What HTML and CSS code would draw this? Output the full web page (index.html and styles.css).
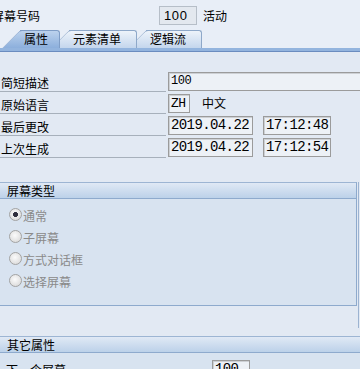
FILE: index.html
```html
<!DOCTYPE html>
<html lang="zh">
<head>
  <meta charset="UTF-8" />
  <title>屏幕属性</title>
  <link rel="stylesheet" href="styles.css">
</head>
<body>
  <div class="topbar">
    <span class="title">屏幕号码</span>
    <span class="num">100</span>
    <span class="status">活动</span>
  </div>

  <div class="tabs">
    <div class="tab active">属性</div>
    <div class="tab t2">元素清单</div>
    <div class="tab t3">逻辑流</div>
  </div>
  <div class="tabline"></div>

  <div class="page">
    <div class="row">
      <span class="label">简短描述</span>
      <span class="field wide">100</span>
    </div>
    <div class="row">
      <span class="label">原始语言</span>
      <span class="field lang">ZH</span>
      <span class="note">中文</span>
    </div>
    <div class="row">
      <span class="label">最后更改</span>
      <span class="field date">2019.04.22</span>
      <span class="field time">17:12:48</span>
    </div>
    <div class="row">
      <span class="label">上次生成</span>
      <span class="field date">2019.04.22</span>
      <span class="field time">17:12:54</span>
    </div>

    <div class="frame">
      <div class="group">
        <div class="group-head">屏幕类型</div>
        <div class="group-body">
          <div class="radio checked"><span class="dot"></span>通常</div>
          <div class="radio"><span class="dot"></span>子屏幕</div>
          <div class="radio"><span class="dot"></span>方式对话框</div>
          <div class="radio"><span class="dot"></span>选择屏幕</div>
        </div>
      </div>
    </div>

    <div class="group other">
      <div class="group-head">其它属性</div>
      <div class="group-body">
        <div class="row next">
          <span class="plain">下一个屏幕</span>
          <span class="field small">100</span>
        </div>
      </div>
    </div>
  </div>
</body>
</html>
```

FILE: styles.css
```css
html, body {
  margin: 0; padding: 0;
  width: 360px;
  height: 369px;
  overflow: hidden;
}
body {
  background: #e8eef7;
  font: 12px "Noto Sans CJK SC", "Liberation Sans", sans-serif;
  color: #000;
}
.topbar {
  display: flex;
  align-items: center;
  height: 30px;
}
.topbar .title {
  flex: none;
  width: 167px;
  margin-left: -8px;
}
.topbar .num {
  box-sizing: border-box;
  width: 38px;
  height: 19px;
  padding-left: 4px;
  border: 1px solid #b6bec8;
  background: #e3e8ef;
  font: 13px "Liberation Sans", sans-serif;
  letter-spacing: 0.6px;
  line-height: 17px;
}
.topbar .status {
  margin-left: 6px;
}

/* tab strip */
.tabs {
  display: flex;
  height: 18px;
  padding-left: 20px;
}
.tab {
  position: relative;
  box-sizing: border-box;
  height: 18px;
  padding-left: 4px;
  border: 1px solid #8ea8c9;
  border-left: none;
  border-bottom: none;
  border-radius: 0 3px 0 0;
  background: linear-gradient(#edf3fa, #c4d6ed);
  line-height: 16px;
}
.tab::before {
  content: "";
  position: absolute;
  top: -1px;
  bottom: 0;
  left: -18px;
  width: 24px;
  box-sizing: border-box;
  background: inherit;
  border-top: 1px solid #8ea8c9;
  border-left: 1px solid #8ea8c9;
  border-radius: 3px 0 0 0;
  transform: skewX(-45deg);
  transform-origin: 0 100%;
  z-index: -1;
}
.tab.active {
  width: 40px;
  z-index: 3;
  background: linear-gradient(#bcd2ed, #8cafdc);
  border-color: #7f9dc6;
}
.tab.active::before {
  border-color: #7f9dc6;
}
.tab.t2 {
  width: 68px;
  margin-left: 9px;
  z-index: 2;
}
.tab.t3 {
  width: 56px;
  margin-left: 9px;
  z-index: 1;
}
.tabline {
  height: 3px;
  background: #93b4de;
  border-bottom: 1px solid #6b8cbf;
}

/* form area */
.page {
  background: #e2e9f3;
  padding-top: 18px;
  height: 400px;
}
.row {
  display: flex;
  align-items: flex-end;
  height: 22px;
}
.label {
  flex: none;
  box-sizing: border-box;
  width: 166px;
  height: 22px;
  padding: 4px 0 0 1px;
  line-height: 17px;
  border-bottom: 1px solid #a7b0bb;
}
.field {
  flex: none;
  box-sizing: border-box;
  height: 19px;
  margin: 0 0 1px 2px;
  padding-left: 2px;
  border: 1px solid #9b9b9b;
  box-shadow: inset 1px 1px 0 #cdd0d4;
  background: #edf1f6;
  font: 14px "Liberation Mono", monospace;
  letter-spacing: -0.6px;
  line-height: 17px;
  white-space: nowrap;
}
.field.wide {
  flex: 1;
  margin-right: -10px;
  font-size: 12px;
  letter-spacing: -0.5px;
}
.field.lang {
  width: 22px;
  font-size: 13px;
}
.note {
  margin: 0 0 3px 12px;
  line-height: 17px;
}
.field.date {
  width: 85px;
}
.field.time {
  width: 68px;
  margin-left: 10px;
}

/* group boxes */
.frame {
  width: 358px;
  margin-top: 24px;
  padding-bottom: 22px;
  border-right: 1px solid #9cb3d1;
}
.group {
  box-sizing: border-box;
  width: 359px;
  margin-left: -2px;
  border: 1px solid #8eaacd;
  border-top-color: #9db5d3;
  background: #d8e3f0;
}
.group-head {
  height: 15px;
  padding-left: 8px;
  line-height: 15px;
  background: linear-gradient(#e0e9f5, #bcd1e9);
  border-bottom: 1px solid #8eaacd;
}
.group-body {
  padding: 5px 0 13px;
}
.radio {
  display: flex;
  align-items: center;
  height: 22px;
  color: #8a8a8a;
}
.radio .dot {
  flex: none;
  box-sizing: border-box;
  width: 13px;
  height: 13px;
  margin: -2px 1px 0 10px;
  border: 1px solid #a3a3a3;
  border-radius: 50%;
  background: radial-gradient(circle at 45% 40%, #fbfbfb, #d4d4d4);
}
.radio.checked .dot {
  background:
    radial-gradient(circle, #2e2e3c 0 2.2px, transparent 2.8px),
    radial-gradient(circle at 45% 40%, #fbfbfb, #d4d4d4);
}
.group.other {
  width: 364px;
  margin-top: 8px;
  border-right: none;
}
.row.next {
  margin-top: 0;
}
.plain {
  flex: none;
  width: 204px;
  padding-left: 7px;
  line-height: 20px;
}
.field.small {
  width: 38px;
}
```
